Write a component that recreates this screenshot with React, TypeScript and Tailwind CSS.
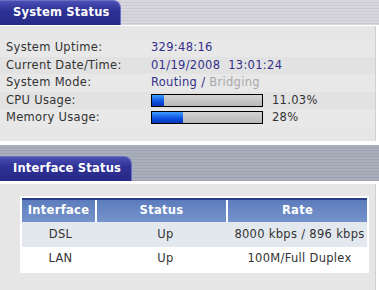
import React from "react";

const stripeLight =
  "bg-[repeating-linear-gradient(180deg,#d6d6dc_0px,#d6d6dc_2px,#cbccd3_2px,#cbccd3_3px)]";
const stripeDark =
  "bg-[repeating-linear-gradient(180deg,#a9aebb_0px,#a9aebb_2px,#9ea4b2_2px,#9ea4b2_3px)]";

const Tab = ({ title, band }: { title: string; band: string }) => (
  <div className={`flex h-full items-end ${band}`}>
    <div className="flex h-[25px] items-center rounded-tr-[8px] border-t border-r border-[#6b6fc4] bg-[linear-gradient(180deg,#4b50b4_0%,#2e3196_40%,#262a86_100%)] pl-[13px] pr-[10px] text-[11.5px] font-bold tracking-[0.2px] text-white">
      {title}
    </div>
  </div>
);

const Bar = ({ pct }: { pct: number }) => (
  <div className="h-[13px] w-[112px] border border-black bg-[linear-gradient(180deg,#d4d4d4_0%,#b8b8b8_100%)]">
    <div
      className="h-full bg-[linear-gradient(180deg,#3f9cff_0%,#0a4fe0_60%,#0636b8_100%)]"
      style={{ width: `${pct}%` }}
    />
  </div>
);

const rows: [string, React.ReactNode][] = [
  ["System Uptime:", <span className="text-[#34308a]">329:48:16</span>],
  [
    "Current Date/Time:",
    <span className="text-[#34308a] whitespace-pre">01/19/2008  13:01:24</span>,
  ],
  [
    "System Mode:",
    <span>
      <span className="text-[#34308a]">Routing /</span>{" "}
      <span className="text-[#a8a8a8]">Bridging</span>
    </span>,
  ],
  [
    "CPU Usage:",
    <div className="flex items-center gap-[9px]">
      <Bar pct={11} />
      <span>11.03%</span>
    </div>,
  ],
  [
    "Memory Usage:",
    <div className="flex items-center gap-[9px]">
      <Bar pct={28} />
      <span>28%</span>
    </div>,
  ],
];

const ifaces = [
  ["DSL", "Up", "8000 kbps / 896 kbps"],
  ["LAN", "Up", "100M/Full Duplex"],
];

export default function App() {
  return (
    <div className="h-[290px] w-[379px] bg-white font-['DejaVu_Sans',Verdana,sans-serif] text-[11.5px] tracking-[0.3px] text-[#333]">
      <div className="h-[25px]">
        <Tab title="System Status" band={stripeLight} />
      </div>
      <div className="mt-[1px] mr-[3px] h-[115px] border-r border-[#d0d0d0] bg-[#e6e6e6] pt-[13px]">
        {rows.map(([label, value], i) => (
          <div
            key={i}
            className={`flex h-[17.5px] items-center ${i % 2 ? "bg-[#e2e2e2]" : "bg-[#e8e8e8]"}`}
          >
            <div className="w-[151px] pl-[6px]">{label}</div>
            <div>{value}</div>
          </div>
        ))}
      </div>
      <div className="mt-[4px] h-[36px]">
        <Tab title="Interface Status" band={stripeDark} />
      </div>
      <div className="mt-[3px] mr-[3px] h-[107px] border-r border-[#d0d0d0] bg-[#e6e6e6] pt-[12px] pl-[20px] pr-[8px]">
        <div className="w-[349px] bg-white p-[2px]">
          <div className="flex h-[24px] border-t-2 border-[#2a3f8a] bg-[linear-gradient(180deg,#5d7cbc_0%,#7594cd_100%)] font-bold text-white">
            <div className="flex w-[75px] items-center justify-center border-r-2 border-white">
              Interface
            </div>
            <div className="flex w-[131px] items-center justify-center border-r-2 border-white">
              Status
            </div>
            <div className="flex flex-1 items-center justify-center">Rate</div>
          </div>
          {ifaces.map((r, i) => (
            <div
              key={i}
              className={`flex h-[24.5px] items-center ${i === 0 ? "bg-[#e3e8ef]" : "bg-white"}`}
            >
              <div className="w-[77px] text-center">{r[0]}</div>
              <div className="w-[133px] text-center">{r[1]}</div>
              <div className="flex-1 text-center">{r[2]}</div>
            </div>
          ))}
        </div>
      </div>
    </div>
  );
}
